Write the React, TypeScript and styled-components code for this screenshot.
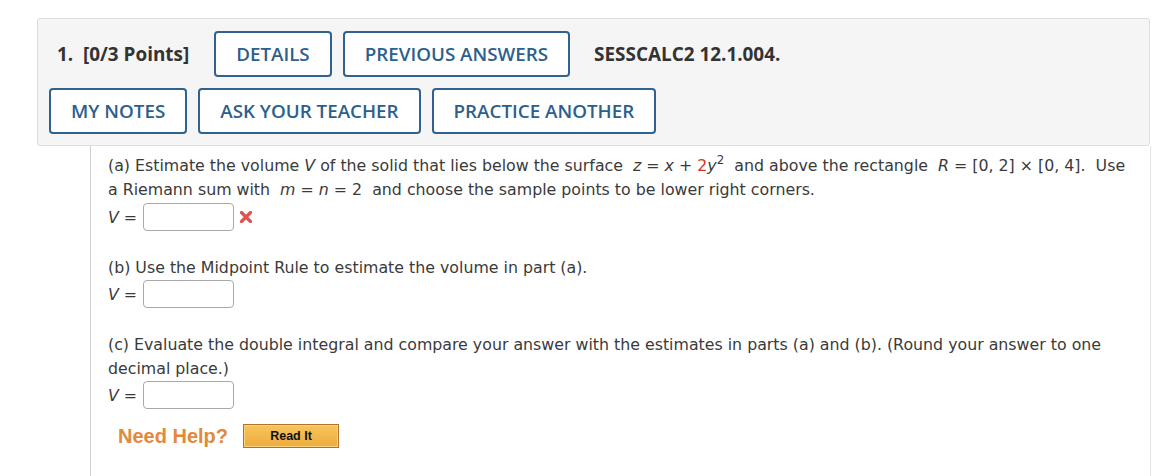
import React from "react";
import styled, { createGlobalStyle } from "styled-components";

const Global = createGlobalStyle`
  html, body { margin: 0; padding: 0; background: #fff; }
  body { font-family: "Open Sans", "Liberation Sans", sans-serif; }
`;

const Page = styled.div`
  padding-top: 18px;
  width: 1170px;
  height: 476px;
  overflow: hidden;
  box-sizing: border-box;
`;

const Header = styled.div`
  margin-left: 37px;
  width: 1113px;
  box-sizing: border-box;
  background: #f5f5f5;
  border: 1px solid #dedede;
  border-radius: 3px;
  padding: 12px 11px 11px 11px;
  display: flex;
  flex-direction: column;
  gap: 11px;
`;

const Row = styled.div<{ $indent?: number }>`
  display: flex;
  align-items: center;
  gap: 11px;
  padding-left: ${(p) => p.$indent ?? 0}px;
`;

const Label = styled.span<{ $left?: number; $right?: number }>`
  font-weight: 700;
  font-size: 18.9px;
  color: #333;
  margin-left: ${(p) => p.$left ?? 0}px;
  margin-right: ${(p) => p.$right ?? 0}px;
  white-space: nowrap;
`;

const Btn = styled.button`
  height: 46px;
  box-sizing: border-box;
  border: 2px solid #2f6291;
  border-radius: 4px;
  background: #fff;
  color: #2d5f8c;
  font-family: "Open Sans", "Liberation Sans", sans-serif;
  font-size: 18.8px;
  font-weight: 600;
  padding: 0 20px;
  white-space: nowrap;
`;

const Content = styled.div`
  margin-left: 90px;
  width: 1061px;
  box-sizing: border-box;
  border-left: 1px solid #cfcfcf;
  border-right: 1px solid #e3e3e3;
  padding: 8px 20px 40px 17px;
  min-height: 340px;
  font-family: "DejaVu Sans", Verdana, sans-serif;
  font-size: 15.8px;
  color: #3a3a3a;
`;

const Part = styled.div<{ $top?: number }>`
  margin-top: ${(p) => p.$top ?? 0}px;
`;

const Para = styled.div`
  line-height: 24px;
`;

const M = styled.span`
  font-style: italic;
`;

const Red = styled.span`
  color: #d0332b;
  font-style: normal;
`;

const Sup = styled.sup`
  font-size: 0.75em;
  line-height: 0;
  vertical-align: 0.55em;
`;

const AnswerRow = styled.div<{ $top?: number }>`
  display: flex;
  align-items: center;
  height: 28px;
  margin-top: ${(p) => p.$top ?? 0}px;
`;

const VLabel = styled.span`
  width: 35px;
  white-space: pre;
`;

const Input = styled.div`
  width: 91px;
  height: 28px;
  box-sizing: border-box;
  border: 1px solid #a9a9a9;
  border-radius: 4px;
  background: #fff;
`;

const Wrong = styled.svg`
  margin-left: 6px;
`;

const HelpRow = styled.div`
  display: flex;
  align-items: center;
  gap: 15px;
  margin-top: 15px;
  padding-left: 10px;
  height: 24px;
`;

const NeedHelp = styled.span`
  font-family: "Liberation Sans", Arial, sans-serif;
  font-weight: 700;
  font-size: 20px;
  color: #e2893a;
`;

const ReadIt = styled.button`
  width: 96px;
  height: 24px;
  box-sizing: border-box;
  border: 1px solid #b3722c;
  box-shadow: inset 0 0 0 1px #f8d27f;
  background: linear-gradient(#f7c45c, #eeac3e);
  font-family: "Liberation Sans", Arial, sans-serif;
  font-weight: 700;
  font-size: 12.5px;
  color: #111;
  padding: 0;
`;

const Answer = ({ wrong, top }: { wrong?: boolean; top?: number }) => (
  <AnswerRow $top={top}>
    <VLabel>
      <M>V</M> =
    </VLabel>
    <Input />
    {wrong && (
      <Wrong width="12" height="12" viewBox="0 0 12 12">
        <path d="M1.5 1.5 L10.5 10.5 M10.5 1.5 L1.5 10.5" stroke="#e0524f" strokeWidth="3.2" strokeLinecap="round" />
      </Wrong>
    )}
  </AnswerRow>
);

export default function App() {
  return (
    <Page>
      <Global />
      <Header>
        <Row $indent={8}>
          <Label $right={14}>1.&nbsp; [0/3 Points]</Label>
          <Btn>DETAILS</Btn>
          <Btn>PREVIOUS ANSWERS</Btn>
          <Label $left={13}>SESSCALC2 12.1.004.</Label>
        </Row>
        <Row>
          <Btn>MY NOTES</Btn>
          <Btn>ASK YOUR TEACHER</Btn>
          <Btn>PRACTICE ANOTHER</Btn>
        </Row>
      </Header>
      <Content>
        <Part>
          <Para>
            (a) Estimate the volume <M>V</M> of the solid that lies below the surface&nbsp; <M>z</M> = <M>x</M> +{" "}
            <Red>2</Red>
            <M>y</M>
            <Sup>2</Sup>&nbsp; and above the rectangle&nbsp; <M>R</M> = [0, 2] × [0, 4].&nbsp; Use a Riemann sum
            with&nbsp; <M>m</M> = <M>n</M> = 2&nbsp; and choose the sample points to be lower right corners.
          </Para>
          <Answer wrong top={1} />
        </Part>
        <Part $top={25}>
          <Para>(b) Use the Midpoint Rule to estimate the volume in part (a).</Para>
          <Answer />
        </Part>
        <Part $top={25}>
          <Para>
            (c) Evaluate the double integral and compare your answer with the estimates in parts (a) and (b). (Round
            your answer to one decimal place.)
          </Para>
          <Answer />
        </Part>
        <HelpRow>
          <NeedHelp>Need Help?</NeedHelp>
          <ReadIt>Read It</ReadIt>
        </HelpRow>
      </Content>
    </Page>
  );
}
